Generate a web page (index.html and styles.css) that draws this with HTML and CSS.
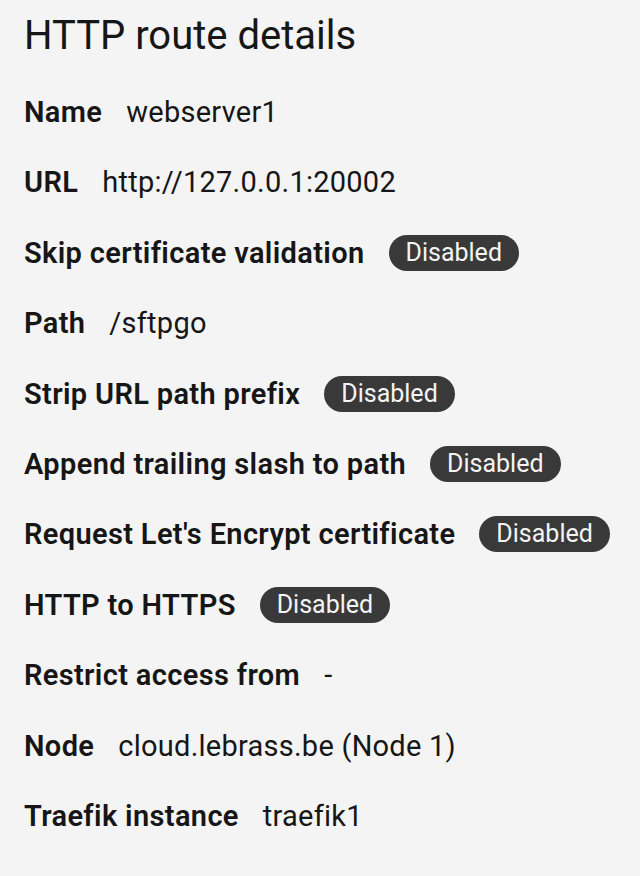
FILE: index.html
```html
<!DOCTYPE html>
<html lang="en">
<head>
    <meta charset="UTF-8">
    <meta name="viewport" content="width=device-width, initial-scale=1.0">
    <title>HTTP route details</title>
    <link rel="stylesheet" href="styles.css">
</head>

<body>
    <div class="details">
        <h1 class="title">HTTP route details</h1>

        <dl class="props">
            <div class="prop">
                <dt>Name</dt>
                <dd>webserver1</dd>
            </div>
            <div class="prop">
                <dt>URL</dt>
                <dd>http://127.0.0.1:20002</dd>
            </div>
            <div class="prop">
                <dt>Skip certificate validation</dt>
                <dd><span class="tag">Disabled</span></dd>
            </div>
            <div class="prop">
                <dt>Path</dt>
                <dd>/sftpgo</dd>
            </div>
            <div class="prop">
                <dt>Strip URL path prefix</dt>
                <dd><span class="tag">Disabled</span></dd>
            </div>
            <div class="prop">
                <dt>Append trailing slash to path</dt>
                <dd><span class="tag">Disabled</span></dd>
            </div>
            <div class="prop">
                <dt>Request Let's Encrypt certificate</dt>
                <dd><span class="tag">Disabled</span></dd>
            </div>
            <div class="prop">
                <dt>HTTP to HTTPS</dt>
                <dd><span class="tag">Disabled</span></dd>
            </div>
            <div class="prop">
                <dt>Restrict access from</dt>
                <dd>-</dd>
            </div>
            <div class="prop">
                <dt>Node</dt>
                <dd>cloud.lebrass.be (Node 1)</dd>
            </div>
            <div class="prop">
                <dt>Traefik instance</dt>
                <dd>traefik1</dd>
            </div>
        </dl>
    </div>
</body>
</html>
```
FILE: styles.css
```css
body {
    margin: 0;
    background-color: #f4f4f4;
    color: #161616;
    font-family: 'Roboto', 'Liberation Sans', sans-serif;
}

.details {
    padding: 12px 24px 0;
}

.title {
    margin: 0;
    font-size: 40px;
    font-weight: 400;
    line-height: 48px;
}

.props {
    display: flex;
    flex-direction: column;
    gap: 30.4px;
    margin: 32px 0 0;
}

.prop {
    display: flex;
    align-items: center;
    gap: 24px;
    height: 40px;
    font-size: 29px;
    line-height: 40px;
    white-space: nowrap;
}

.prop dt {
    font-weight: 600;
    letter-spacing: 0.35px;
}

.prop dd {
    margin: 0;
    display: flex;
    align-items: center;
    letter-spacing: 0.25px;
}

.tag {
    display: inline-flex;
    align-items: center;
    height: 36px;
    padding: 0 17px;
    border-radius: 18px;
    background-color: #393939;
    color: #f4f4f4;
    font-size: 25px;
    line-height: 36px;
    letter-spacing: 0;
}
```
